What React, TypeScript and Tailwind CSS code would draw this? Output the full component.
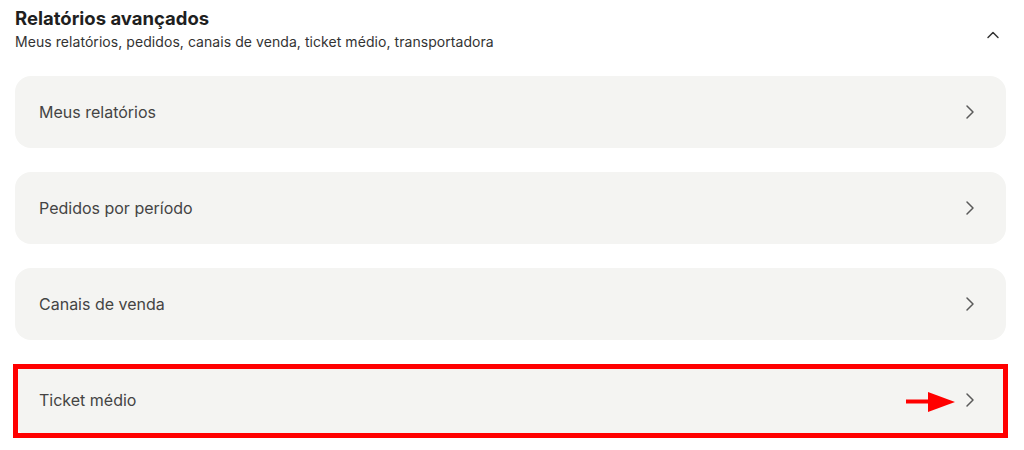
import { ChevronRight, ChevronUp } from 'lucide-react';

const ITEMS = ['Meus relatórios', 'Pedidos por período', 'Canais de venda', 'Ticket médio'];

export default function App() {
    return (
        <div className="bg-white w-[1024px] h-[450px] overflow-hidden px-[15px] pt-[6px] font-['Inter',sans-serif]">
            <div className="flex items-start justify-between pr-[3px]">
                <div className="flex flex-col">
                    <h2 className="text-[18.5px] leading-[24px] font-bold text-[#1f1f1f]">Relatórios avançados</h2>
                    <p className="mt-[2px] text-[14px] leading-[20px] tracking-[0.06px] text-[#333333]">
                        Meus relatórios, pedidos, canais de venda, ticket médio, transportadora
                    </p>
                </div>
                <ChevronUp size={20} strokeWidth={1.75} className="mt-[19px] mr-[3px] text-[#333333]" />
            </div>

            <div className="mt-[24px] flex flex-col gap-6 w-[991px]">
                {ITEMS.map((label, index) => (
                    <div
                        key={label}
                        className="relative h-[72px] rounded-2xl bg-[#f4f4f2] flex items-center justify-between pl-6 pr-6"
                    >
                        <span className="text-[16px] text-[#444444]">{label}</span>
                        <ChevronRight size={24} strokeWidth={1.5} className="text-[#5a5a5a]" />
                        {index === ITEMS.length - 1 && (
                            <>
                                <div className="absolute -left-[2px] -right-[2px] top-0 -bottom-[2px] border-[5px] border-[#ff0000]" />
                                <svg
                                    className="absolute left-[891px] top-[28px]"
                                    width="50"
                                    height="20"
                                    viewBox="0 0 50 20"
                                >
                                    <rect x="0" y="7.5" width="24" height="4" fill="#ff0000" />
                                    <polygon points="22,0 49,10 22,20" fill="#ff0000" />
                                </svg>
                            </>
                        )}
                    </div>
                ))}
            </div>
        </div>
    );
}
